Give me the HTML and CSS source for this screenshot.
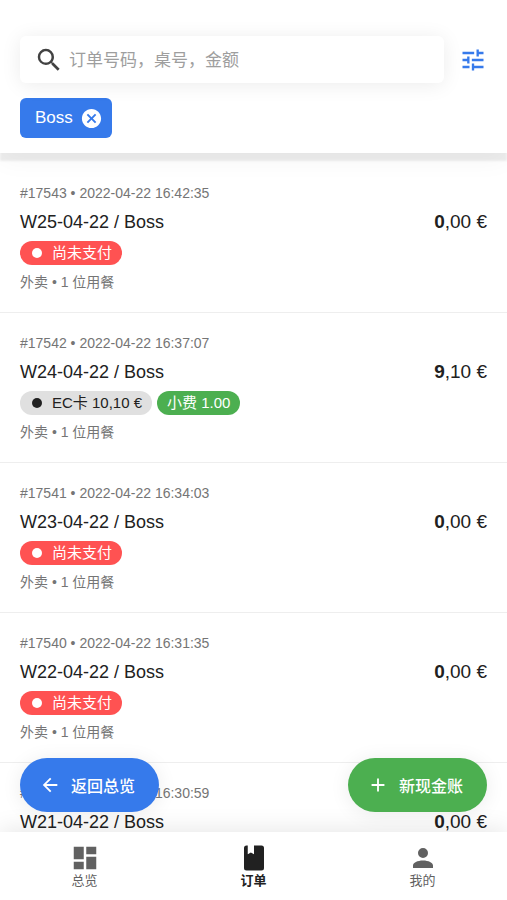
FILE: index.html
```html
<!DOCTYPE html>
<html lang="zh-CN">

<head>
    <meta charset="UTF-8">
    <meta name="viewport" content="width=device-width, initial-scale=1.0">
    <title>订单</title>
    <link rel="stylesheet" href="styles.css">
</head>

<body>
    <div class="app">
        <header class="header">
            <div class="search-row">
                <label class="search" for="search">
                    <svg class="search-icon" viewBox="0 0 24 24"><path d="M9.5 3A6.5 6.5 0 0 1 16 9.5c0 1.61-.59 3.09-1.56 4.23l.27.27h.79l5 5-1.5 1.5-5-5v-.79l-.27-.27A6.52 6.52 0 0 1 9.5 16a6.5 6.5 0 1 1 0-13m0 2C7 5 5 7 5 9.5S7 14 9.5 14 14 12 14 9.5 12 5 9.5 5z"/></svg>
                    <input type="text" id="search" name="search" placeholder="订单号码，桌号，金额">
                </label>
                <button type="button" class="filter" aria-label="筛选">
                    <svg viewBox="0 0 24 24"><path d="M3 17v2h6v-2H3M3 5v2h10V5H3m10 16v-2h8v-2h-8v-2h-2v6h2M7 9v2H3v2h4v2h2V9H7m14 4v-2H11v2h10m-6-4h2V7h4V5h-4V3h-2v6z"/></svg>
                </button>
            </div>
            <button type="button" class="chip">
                Boss
                <svg viewBox="0 0 24 24"><path d="M12 2C6.47 2 2 6.47 2 12s4.47 10 10 10 10-4.47 10-10S17.53 2 12 2m5 13.59L15.59 17 12 13.41 8.41 17 7 15.59 10.59 12 7 8.41 8.41 7 12 10.59 15.59 7 17 8.41 13.41 12 17 15.59z"/></svg>
            </button>
        </header>

        <main class="orders">
            <article class="order">
                <div class="meta">#17543 • 2022-04-22 16:42:35</div>
                <div class="title"><span>W25-04-22 / Boss</span><span class="price"><b>0</b>,00 €</span></div>
                <div class="tags"><span class="tag unpaid"><i class="dot"></i>尚未支付</span></div>
                <div class="info">外卖 • 1 位用餐</div>
            </article>
            <article class="order">
                <div class="meta">#17542 • 2022-04-22 16:37:07</div>
                <div class="title"><span>W24-04-22 / Boss</span><span class="price"><b>9</b>,10 €</span></div>
                <div class="tags">
                    <span class="tag card"><i class="dot"></i>EC卡 10,10 €</span>
                    <span class="tag tip">小费 1.00</span>
                </div>
                <div class="info">外卖 • 1 位用餐</div>
            </article>
            <article class="order">
                <div class="meta">#17541 • 2022-04-22 16:34:03</div>
                <div class="title"><span>W23-04-22 / Boss</span><span class="price"><b>0</b>,00 €</span></div>
                <div class="tags"><span class="tag unpaid"><i class="dot"></i>尚未支付</span></div>
                <div class="info">外卖 • 1 位用餐</div>
            </article>
            <article class="order">
                <div class="meta">#17540 • 2022-04-22 16:31:35</div>
                <div class="title"><span>W22-04-22 / Boss</span><span class="price"><b>0</b>,00 €</span></div>
                <div class="tags"><span class="tag unpaid"><i class="dot"></i>尚未支付</span></div>
                <div class="info">外卖 • 1 位用餐</div>
            </article>
            <article class="order">
                <div class="meta">#17539 • 2022-04-22 16:30:59</div>
                <div class="title"><span>W21-04-22 / Boss</span><span class="price"><b>0</b>,00 €</span></div>
            </article>
        </main>

        <div class="bottom">
            <div class="actions">
                <button type="button" class="fab back">
                    <svg viewBox="0 0 24 24"><path d="M20 11v2H8l5.5 5.5-1.42 1.42L4.16 12l7.92-7.92L13.5 5.5 8 11h12z"/></svg>
                    返回总览
                </button>
                <button type="button" class="fab new">
                    <svg viewBox="0 0 24 24"><path d="M19 13h-6v6h-2v-6H5v-2h6V5h2v6h6v2z"/></svg>
                    新现金账
                </button>
            </div>
            <nav class="nav">
                <a href="#overview">
                    <svg viewBox="0 0 24 24"><path d="M13 3v6h8V3m-8 18h8V11h-8M3 21h8v-6H3m0-2h8V3H3v10z"/></svg>
                    总览
                </a>
                <a href="#orders" class="active">
                    <svg viewBox="0 0 24 24"><path d="M18 22a2 2 0 0 0 2-2V4a2 2 0 0 0-2-2h-6v7L9.500 7.500 7 9V2H6a2 2 0 0 0-2 2v16a2 2 0 0 0 2 2h12z"/></svg>
                    订单
                </a>
                <a href="#me">
                    <svg viewBox="0 0 24 24"><path d="M12 4a4 4 0 1 1 0 8 4 4 0 0 1 0-8m0 10c4.420 0 8 1.790 8 4v2H4v-2c0-2.210 3.580-4 8-4z"/></svg>
                    我的
                </a>
            </nav>
        </div>
    </div>
</body>

</html>
```

FILE: styles.css
```css
* {
    box-sizing: border-box;
}

body {
    margin: 0;
    font-family: "Liberation Sans", "Noto Sans CJK SC", sans-serif;
    color: #212121;
    background-color: #ffffff;
}

button,
input {
    font-family: inherit;
    border: none;
    padding: 0;
}

button {
    cursor: pointer;
}

svg {
    display: block;
    flex: none;
    fill: currentColor;
}

.app {
    display: flex;
    flex-direction: column;
    height: 100vh;
}

/* search and filter */
.header {
    position: relative;
    z-index: 1;
    padding: 36px 20px 15px;
    background-color: #ffffff;
    box-shadow: 0 8px 2px rgba(0, 0, 0, 0.07), 0 8px 24px rgba(0, 0, 0, 0.04);
}

.search-row {
    display: flex;
    align-items: center;
    gap: 15px;
    margin-bottom: 15px;
}

.search {
    display: flex;
    flex: 1;
    align-items: center;
    gap: 5px;
    min-width: 0;
    height: 47px;
    padding: 0 14px;
    border-radius: 6px;
    box-shadow: 0 2px 20px rgba(0, 0, 0, 0.08);
}

.search-icon {
    width: 30px;
    height: 30px;
    color: #424242;
}

.search input {
    flex: 1;
    min-width: 0;
    padding-top: 2px;
    font-size: 17px;
    line-height: 24px;
    color: #212121;
    background: none;
    outline: none;
}

.search input::placeholder {
    color: #9e9e9e;
}

.filter {
    background: none;
    color: #367aeb;
}

.filter svg {
    width: 28px;
    height: 28px;
}

.chip {
    display: flex;
    align-items: center;
    gap: 7px;
    height: 40px;
    padding: 0 9px 0 15px;
    border-radius: 6px;
    font-size: 17px;
    color: #ffffff;
    background-color: #367aeb;
}

.chip svg {
    width: 23px;
    height: 23px;
}

/* order list */
.orders {
    flex: 1;
    min-height: 0;
    padding-top: 10px;
    overflow-y: auto;
    scrollbar-width: none;
}

.order {
    padding: 19px 20px;
    border-bottom: 1px solid #eeeeee;
}

.meta,
.info {
    font-size: 14px;
    line-height: 22px;
    color: #757575;
}

.title {
    display: flex;
    justify-content: space-between;
    font-size: 18px;
    line-height: 36px;
}

.price {
    font-size: 19px;
}

.tags {
    display: flex;
    gap: 5px;
    margin: 1px 0 6px;
}

.tag {
    display: flex;
    align-items: center;
    height: 24px;
    padding: 0 10px;
    border-radius: 12px;
    font-size: 15px;
    line-height: 24px;
}

.dot {
    width: 10px;
    height: 10px;
    margin: 0 10px 0 2px;
    border-radius: 50%;
    background-color: currentColor;
}

.unpaid {
    color: #ffffff;
    background-color: #ff5252;
}

.card {
    background-color: #e0e0e0;
}

.tip {
    color: #ffffff;
    background-color: #4caf50;
}

/* floating buttons and bottom navigation */
.bottom {
    position: relative;
    z-index: 1;
}

.actions {
    position: absolute;
    right: 20px;
    bottom: 100%;
    left: 20px;
    display: flex;
    justify-content: space-between;
    padding-bottom: 20px;
}

.fab {
    display: flex;
    align-items: center;
    gap: 10px;
    height: 54px;
    padding: 0 24px 0 19px;
    border-radius: 27px;
    font-size: 16px;
    font-weight: 500;
    color: #ffffff;
    box-shadow: 0 2px 20px rgba(0, 0, 0, 0.08);
}

.fab svg {
    width: 22px;
    height: 22px;
}

.back {
    background-color: #367aeb;
}

.new {
    background-color: #4caf50;
}

.nav {
    display: flex;
    height: 68px;
    background-color: #ffffff;
    box-shadow: 0 -2px 24px rgba(0, 0, 0, 0.1);
}

.nav a {
    display: flex;
    flex: 1;
    flex-direction: column;
    align-items: center;
    padding-top: 11px;
    font-size: 13px;
    line-height: 16px;
    color: #616161;
    text-decoration: none;
}

.nav svg {
    width: 30px;
    height: 30px;
}

.nav .active {
    font-weight: bold;
    color: #212121;
}
```
